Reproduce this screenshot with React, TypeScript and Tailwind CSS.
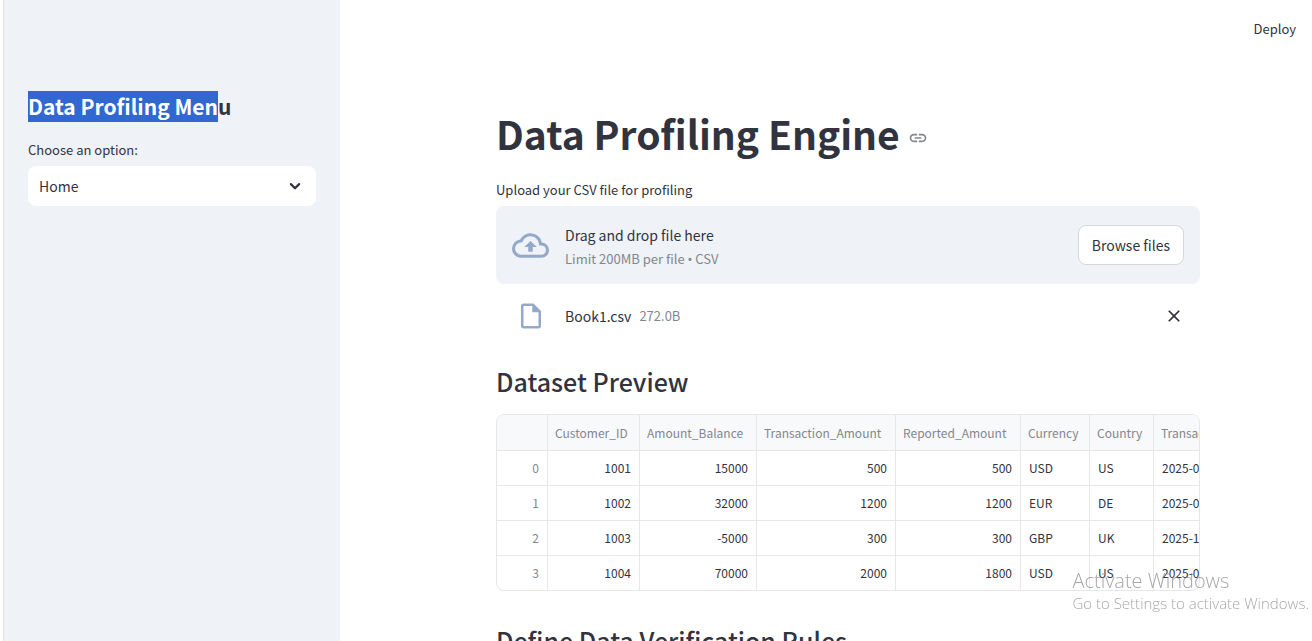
import { useState } from "react";
import { MdClose, MdLink, MdOutlineBackup, MdOutlineInsertDriveFile } from "react-icons/md";

type Row = [number, number, number, number, string, string, string];

const columns = [
  { name: "Customer_ID", numeric: true, width: "w-[92px]" },
  { name: "Amount_Balance", numeric: true, width: "w-[117px]" },
  { name: "Transaction_Amount", numeric: true, width: "w-[139px]" },
  { name: "Reported_Amount", numeric: true, width: "w-[125px]" },
  { name: "Currency", numeric: false, width: "w-[69px]" },
  { name: "Country", numeric: false, width: "w-[64px]" },
  { name: "Transaction_Date", numeric: false, width: "w-[124px]" },
];

const rows: Row[] = [
  [1001, 15000, 500, 500, "USD", "US", "2025-01-05"],
  [1002, 32000, 1200, 1200, "EUR", "DE", "2025-02-11"],
  [1003, -5000, 300, 300, "GBP", "UK", "2025-12-01"],
  [1004, 70000, 2000, 1800, "USD", "US", "2025-03-09"],
];

function Sidebar() {
  const [page, setPage] = useState("Home");
  return (
    <aside className="w-[337px] shrink-0 border-l border-[#dfe2e7] bg-[#eff2f6] px-6 pt-[91px]">
      <h2 className="text-[21px] leading-[31px] font-bold">
        <span className="inline-block bg-[#3067d1] text-white">Data Profiling Men</span>u
      </h2>
      <label htmlFor="page" className="mt-4 block text-[13px] leading-6">
        Choose an option:
      </label>
      <div className="mt-1 grid items-center">
        <select
          id="page"
          value={page}
          onChange={(e) => setPage(e.target.value)}
          className="col-start-1 row-start-1 h-10 w-full appearance-none rounded-lg bg-white px-[11px] text-[14px]"
        >
          <option>Home</option>
        </select>
        <svg
          viewBox="0 0 24 24"
          className="pointer-events-none col-start-1 row-start-1 mr-3 size-[18px] justify-self-end"
          fill="none"
          stroke="currentColor"
          strokeWidth="3"
          strokeLinecap="round"
          strokeLinejoin="round"
          aria-hidden="true"
        >
          <path d="M6.500 9.500l5.500 5.500 5.500-5.500" />
        </svg>
      </div>
    </aside>
  );
}

function Uploader() {
  return (
    <section>
      <label htmlFor="browse" className="block text-[13px] leading-6">
        Upload your CSV file for profiling
      </label>
      <div className="mt-1 flex items-center gap-4 rounded-lg bg-[#eff2f6] px-4 py-[15px]">
        <MdOutlineBackup className="size-[37px] shrink-0 text-[#94a9c9]" aria-hidden="true" />
        <div className="flex-1 pt-1">
          <p className="text-[14px] leading-5">Drag and drop file here</p>
          <p className="mt-1 text-[13px] leading-5 text-[#84868d]">
            Limit 200MB per file <span className="font-['Noto_Sans',sans-serif]">•</span> CSV
          </p>
        </div>
        <button
          id="browse"
          type="button"
          className="h-10 rounded-lg border border-[#d6d7da] bg-white px-[13px] text-[14px]"
        >
          Browse files
        </button>
      </div>
      <div className="mt-3 flex h-10 items-center px-4">
        <div className="flex w-[37px] justify-center">
          <MdOutlineInsertDriveFile className="size-[30px] text-[#94a9c9]" aria-hidden="true" />
        </div>
        <span className="ml-4 text-[14px]">Book1.csv</span>
        <span className="ml-2 flex-1 text-[13px] text-[#84868d]">272.0B</span>
        <button type="button" aria-label="Remove Book1.csv" className="flex size-5 items-center justify-center">
          <MdClose className="size-5" />
        </button>
      </div>
    </section>
  );
}

function DataTable() {
  return (
    <div className="mt-4 overflow-hidden rounded-lg border border-[#e6e7e9]">
      <table className="w-[781px] table-fixed border-separate border-spacing-0 text-[12px] leading-[34px]">
        <thead className="bg-[#f8f9fb] text-[#84868d]">
          <tr>
            <th className="h-9 w-[51px] border-r border-b border-[#e6e7e9]" aria-label="Row" />
            {columns.map((c) => (
              <th
                key={c.name}
                className={`${c.width} h-9 border-r border-b border-[#e6e7e9] px-[7px] py-0 text-left font-normal whitespace-nowrap`}
              >
                {c.name}
              </th>
            ))}
          </tr>
        </thead>
        <tbody>
          {rows.map((row, i) => (
            <tr key={row[0]} className="group">
              <td className="h-[35px] border-r border-b border-[#e6e7e9] px-2 py-0 text-right text-[#84868d] group-last:h-[34px] group-last:border-b-0">
                {i}
              </td>
              {row.map((value, j) => (
                <td
                  key={columns[j].name}
                  className={`${columns[j].numeric ? "text-right" : "text-left"} h-[35px] border-r border-b border-[#e6e7e9] px-2 py-0 whitespace-nowrap group-last:h-[34px] group-last:border-b-0`}
                >
                  {value}
                </td>
              ))}
            </tr>
          ))}
        </tbody>
      </table>
    </div>
  );
}

export default function App() {
  return (
    <div className="flex h-screen overflow-hidden bg-white pl-[3px] font-['Noto_Sans_CJK_SC',sans-serif] text-[#31333f]">
      <Sidebar />
      <div className="min-w-0 flex-1">
        <header className="flex h-[58px] items-center justify-end px-4">
          <button type="button" className="text-[13px] leading-6">
            Deploy
          </button>
        </header>
        <main className="pt-[49px] pr-28 pl-39">
          <div className="flex items-center gap-2">
            <h1 className="text-[39px] leading-[53px] font-bold">Data Profiling Engine</h1>
            <a href="#data-profiling-engine" aria-label="Link to heading" className="mt-2 text-[#84868d]">
              <MdLink className="size-5" />
            </a>
          </div>
          <div className="mt-[18px]">
            <Uploader />
          </div>
          <h2 className="mt-7 text-[25px] leading-[34px] font-medium">Dataset Preview</h2>
          <DataTable />
          <h2 className="mt-8 text-[25px] leading-[34px] font-medium">Define Data Verification Rules</h2>
        </main>
      </div>
      <div className="pointer-events-none fixed right-[3px] bottom-7 font-['Open_Sans',sans-serif] font-light text-[#808080]/70">
        <p className="text-[20px] leading-6">Activate Windows</p>
        <p className="text-[15px] leading-5">Go to Settings to activate Windows.</p>
      </div>
    </div>
  );
}
